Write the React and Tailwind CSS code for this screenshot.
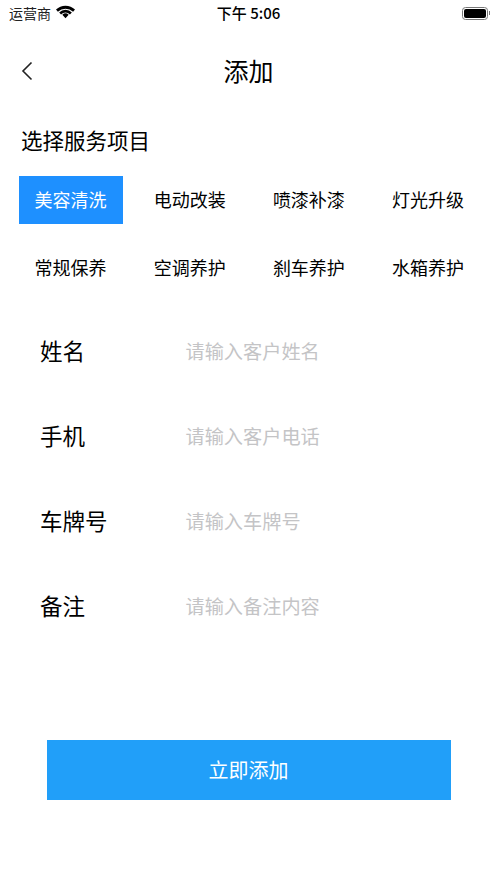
import React from "react";
const f = { fontFamily: '"Noto Sans CJK SC", sans-serif' };
const tags = ["美容清洗","电动改装","喷漆补漆","灯光升级","常规保养","空调养护","刹车养护","水箱养护"];
const rows = [["姓名","请输入客户姓名"],["手机","请输入客户电话"],["车牌号","请输入车牌号"],["备注","请输入备注内容"]];
export default function App() {
  return (
    <div className="w-[497px] h-[883px] bg-white text-black flex flex-col overflow-hidden" style={f}>
      <div className="h-[26px] flex items-center justify-between pl-[9px] pr-[7px] text-[14px] relative">
        <div className="flex items-center gap-[5px]">
          <span className="text-[#222]">运营商</span>
          <svg width="19" height="14" viewBox="0 0 18 13" className="-mt-[3px]"><path d="M9 12.5 L6 9.2 A4.4 4.4 0 0 1 12 9.2 Z M9 0.5 A13 13 0 0 1 18 4.2 L16.2 6.2 A10.5 10.5 0 0 0 1.8 6.2 L0 4.2 A13 13 0 0 1 9 0.5 Z M9 4.3 A8.5 8.5 0 0 1 15 6.9 L13.2 8.8 A6 6 0 0 0 4.8 8.8 L3 6.9 A8.5 8.5 0 0 1 9 4.3 Z" fill="#000"/></svg>
        </div>
        <span className="absolute left-0 right-0 text-center font-medium text-[15px]">下午 5:06</span>
        <div className="flex items-center relative z-10">
          <div className="w-[26px] h-[13px] border border-[#777] rounded-[3.5px] p-[1px]"><div className="h-full w-full bg-black rounded-[2px]"></div></div>
          <div className="w-[1.5px] h-[4px] bg-[#777] ml-[1px]"></div>
        </div>
      </div>
      <div className="h-[64px] relative flex items-center justify-center text-[25px] mt-[13px]">
        <svg width="12" height="20" viewBox="0 0 12 20" className="absolute left-[21px] top-[22px]" fill="none" stroke="#222" strokeWidth="1.6"><path d="M10.5 1.5 L2 10 L10.5 18.5"/></svg>
        <span>添加</span>
      </div>
      <div className="mt-[21px] ml-[21px] text-[21.5px] leading-[32px]">选择服务项目</div>
      <div className="mt-[20px] pl-[18.5px] grid grid-cols-[repeat(4,104px)] gap-x-[15.2px] gap-y-[19px]">
        {tags.map((t,i)=>(
          <div key={t} className={`h-[48px] flex items-center justify-center text-[18px] ${i<4?"pb-[2px]":""} ${i===0?"bg-[#1e90ff] text-white":""}`}>{t}</div>
        ))}
      </div>
      <div className="mt-[18px] flex flex-col">
        {rows.map(([a,b])=>(
          <div key={a} className="h-[85px] flex items-center pl-[40px]">
            <span className="w-[146px] text-[22.5px] pb-[2px]">{a}</span>
            <span className="text-[19.2px] text-[#c4c4c6] -ml-[0.5px]">{b}</span>
          </div>
        ))}
      </div>
      <div className="mt-[91px] ml-[46.5px] w-[404px] h-[60px] bg-[#219ff9] text-white flex items-center justify-center text-[20px]">立即添加</div>
    </div>
  );
}
